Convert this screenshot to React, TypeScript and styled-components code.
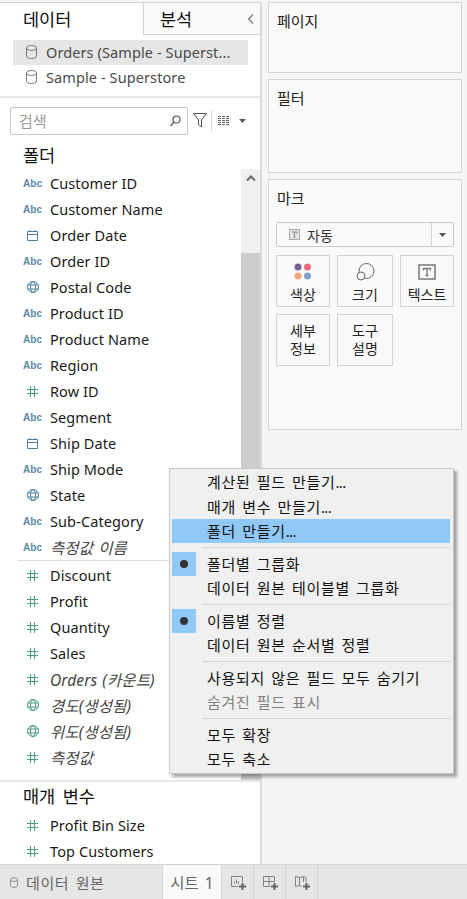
import React from "react";
import styled, { createGlobalStyle } from "styled-components";

const Global = createGlobalStyle`
  html, body { margin: 0; padding: 0; height: 100%; background: #f5f5f5; }
  #root { height: 899px; }
  * { box-sizing: border-box; }
  body { font-family: "Noto Sans", "Noto Sans CJK KR", sans-serif; color: #1a1a1a; overflow: hidden; }
`;

const Page = styled.div`
  position: relative;
  width: 467px;
  height: 899px;
  display: flex;
  flex-direction: column;
  background: #f5f5f5;
`;
const Main = styled.div`
  height: 864px;
  display: flex;
  padding-top: 2px;
`;
const LeftPanel = styled.div`
  width: 262px;
  background: #fff;
  border-top: 1px solid #d4d4d4;
  border-right: 2px solid #d9d9d9;
  display: flex;
  flex-direction: column;
`;
const Tabs = styled.div`
  height: 32px;
  display: flex;
`;
const DataTab = styled.div`
  width: 143px;
  padding: 2px 0 0 23px;
  font-size: 17.5px;
  line-height: 28px;
  color: #111;
`;
const AnalysisTab = styled.div`
  flex: 1;
  display: flex;
  align-items: center;
  justify-content: space-between;
  padding: 0 6px 0 16px;
  background: #fafafa;
  border-left: 1px solid #d4d4d4;
  border-bottom: 1px solid #d4d4d4;
  font-size: 17.5px;
  color: #111;
`;
const Sources = styled.div`
  padding: 5px 13px 7px;
  height: 63px;
  border-bottom: 2px solid #e6e6e6;
`;
const Source = styled.div<{ $selected?: boolean }>`
  height: 25px;
  width: 235px;
  display: flex;
  align-items: center;
  gap: 9px;
  padding: 0 0 2px 13px;
  font-size: 14.5px;
  letter-spacing: 0.1px;
  color: #4a4a4a;
  background: ${(p) => (p.$selected ? "#e6e6e6" : "transparent")};
  white-space: nowrap;
`;
const SearchRow = styled.div`
  display: flex;
  align-items: center;
  padding: 9px 0 0 10px;
  height: 36px;
`;
const SearchBox = styled.div`
  width: 178px;
  height: 28px;
  border: 1px solid #c8c8c8;
  border-radius: 2px;
  display: flex;
  align-items: center;
  justify-content: space-between;
  padding: 0 6px 0 8px;
  font-size: 15px;
  color: #9a9a9a;
`;
const FilterButton = styled.div`
  width: 24px;
  height: 22px;
  display: flex;
  align-items: center;
  justify-content: center;
  border-right: 1px solid #d9d9d9;
`;
const ViewButton = styled.div`
  display: flex;
  align-items: center;
  gap: 9px;
  padding-left: 6px;
`;
const SectionTitle = styled.div<{ $height: number; $pad?: number }>`
  height: ${(p) => p.$height}px;
  padding: 0 0 ${(p) => p.$pad ?? 0}px 23px;
  font-size: 17.5px;
  word-spacing: 3px;
  color: #111;
  display: flex;
  align-items: flex-end;
  line-height: 26px;
`;
const FieldsArea = styled.div`
  height: 613px;
  display: flex;
  border-bottom: 2px solid #e6e6e6;
`;
const FieldList = styled.div`
  width: 241px;
  padding-top: 1px;
`;
const FieldGroup = styled.div<{ $divider?: boolean }>`
  margin-left: ${(p) => (p.$divider ? "18px" : "0")};
  border-bottom: ${(p) => (p.$divider ? "1px solid #dedede" : "none")};
  margin-bottom: ${(p) => (p.$divider ? "1px" : "0")};
`;
const FieldRow = styled.div<{ $indentless?: boolean }>`
  height: 26px;
  display: flex;
  align-items: center;
  margin-left: ${(p) => (p.$indentless ? "-18px" : "0")};
`;
const IconSlot = styled.div`
  width: 50px;
  padding-left: 15px;
  display: flex;
  align-items: center;
  justify-content: center;
  flex-shrink: 0;
`;
const AbcIcon = styled.span`
  font-family: "Liberation Sans", sans-serif;
  font-size: 10px;
  font-weight: 700;
  color: #5b8aa6;
`;
const FieldName = styled.span<{ $italic?: boolean }>`
  font-size: ${(p) => (p.$italic ? "15.5px" : "14.5px")};
  letter-spacing: 0.1px;
  word-spacing: ${(p) => (p.$italic ? "1px" : "0")};
  white-space: nowrap;
  font-style: ${(p) => (p.$italic ? "italic" : "normal")};
  color: ${(p) => (p.$italic ? "#444" : "#1a1a1a")};
`;
const ScrollBar = styled.div`
  width: 19px;
  background: #f0f0f0;
  display: flex;
  flex-direction: column;
`;
const ScrollArrow = styled.div`
  height: 84px;
  display: flex;
  justify-content: center;
  padding-top: 6px;
`;
const ScrollThumb = styled.div`
  flex: 1;
  background: #cdcdcd;
`;
const Params = styled.div`
  display: flex;
  flex-direction: column;
`;

const RightPanel = styled.div`
  flex: 1;
  padding: 0 5px 0 6px;
  display: flex;
  flex-direction: column;
  gap: 6px;
`;
const Card = styled.div<{ $height: number }>`
  height: ${(p) => p.$height}px;
  background: #fafafa;
  border: 1px solid #d4d4d4;
  padding: 0 7px;
`;
const CardTitle = styled.div`
  font-size: 15px;
  line-height: 20px;
  padding: 8px 0 0 1px;
  color: #222;
`;
const MarkSelect = styled.div`
  margin-top: 14px;
  height: 25px;
  width: 178px;
  border: 1px solid #c8c8c8;
  border-radius: 2px;
  display: flex;
  align-items: center;
  font-size: 14px;
  color: #333;
`;
const MarkLabel = styled.div`
  flex: 1;
  display: flex;
  align-items: center;
  gap: 7px;
  padding-left: 12px;
`;
const MarkCaret = styled.div`
  width: 22px;
  height: 100%;
  border-left: 1px solid #d4d4d4;
  display: flex;
  align-items: center;
  justify-content: center;
`;
const MarkGrid = styled.div`
  display: grid;
  grid-template-columns: 54px 56px 54px;
  gap: 7px 7px;
  margin-top: 8px;
`;
const MarkButton = styled.div<{ $tall?: boolean }>`
  height: 52px;
  border: 1px solid #d4d4d4;
  display: flex;
  flex-direction: column;
  align-items: center;
  justify-content: ${(p) => (p.$tall ? "center" : "flex-end")};
  font-size: 14px;
  line-height: 18px;
  color: #222;
  padding-bottom: ${(p) => (p.$tall ? "0" : "2px")};
  text-align: center;
`;
const MarkIcon = styled.div`
  height: 28px;
  display: flex;
  align-items: center;
  justify-content: center;
`;

const BottomBar = styled.div`
  height: 35px;
  background: #e6e6e6;
  border-top: 1px solid #d4d4d4;
  display: flex;
  align-items: stretch;
`;
const SourceTab = styled.div`
  width: 163px;
  display: flex;
  align-items: center;
  gap: 8px;
  padding-left: 10px;
  font-size: 15px;
  word-spacing: 2px;
  letter-spacing: 0.6px;
  color: #666;
  border-right: 1px solid #d4d4d4;
`;
const SheetTab = styled.div`
  width: 59px;
  display: flex;
  align-items: center;
  justify-content: center;
  background: #fafafa;
  font-size: 15.5px;
  word-spacing: 2px;
  color: #666;
  border-right: 1px solid #d4d4d4;
`;
const NewTab = styled.div`
  width: 32px;
  display: flex;
  align-items: center;
  justify-content: center;
  padding: 2px 0 0 2px;
  border-right: 1px solid #d4d4d4;
`;

const Menu = styled.div`
  position: absolute;
  left: 169px;
  top: 468px;
  width: 285px;
  height: 306px;
  background: #f0f0f0;
  border: 1px solid #c8c8c8;
  box-shadow: 3px 3px 3px rgba(0, 0, 0, 0.35);
  padding: 0 3px 0 2px;
  display: flex;
  flex-direction: column;
`;
const MenuItem = styled.div<{ $active?: boolean; $disabled?: boolean; $h?: number }>`
  height: ${(p) => p.$h ?? 24}px;
  display: flex;
  align-items: center;
  background: ${(p) => (p.$active ? "#90c8f6" : "transparent")};
  color: ${(p) => (p.$disabled ? "#808080" : "#111")};
  font-size: 15px;
  letter-spacing: 0.7px;
  word-spacing: 1.6px;
  white-space: nowrap;
`;
const MenuLabel = styled.span`
  margin-bottom: 1px;
`;
const MenuDots = styled.span`
  letter-spacing: -0.6px;
`;
const MenuCheck = styled.div<{ $on?: boolean }>`
  width: 24px;
  height: 24px;
  margin-right: 11px;
  flex-shrink: 0;
  display: flex;
  align-items: center;
  justify-content: center;
  background: ${(p) => (p.$on ? "#90c8f6" : "transparent")};
`;
const MenuDot = styled.span`
  width: 8px;
  height: 8px;
  border-radius: 50%;
  background: #333;
`;
const MenuSep = styled.div`
  height: 1px;
  flex-shrink: 0;
  margin: 4px 0 4px 30px;
  background: #d2d2d2;
`;

const Db = ({ c = "#777", w = 11, h = 14 }: { c?: string; w?: number; h?: number }) => (
  <svg width={w} height={h} viewBox="0 0 11 14" fill="none" stroke={c} strokeWidth="1">
    <path d="M.5 3c0-1.4 2.2-2.500 5-2.500s5 1.100 5 2.500v8c0 1.400-2.200 2.500-5 2.500s-5-1.100-5-2.500z" />
    <path d="M.5 3c0 1.400 2.200 2.500 5 2.500s5-1.100 5-2.500" />
  </svg>
);
const Hash = ({ c = "#4a9e82" }: { c?: string }) => (
  <svg width="11" height="11" viewBox="0 0 11 11" stroke={c} strokeWidth="1" fill="none">
    <path d="M3.500 0v11M7.500 0v11M0 3.500h11M0 7.500h11" />
  </svg>
);
const Calendar = () => (
  <svg width="11" height="11" viewBox="0 0 11 11" stroke="#4d7f9c" strokeWidth="1" fill="none">
    <path d="M.5 1.500h10v9H.5zM.5 4.500h10M3 0v2M8 0v2" />
  </svg>
);
const Globe = ({ c = "#4d7f9c" }: { c?: string }) => (
  <svg width="12" height="12" viewBox="0 0 12 12" stroke={c} strokeWidth="1" fill="none">
    <circle cx="6" cy="6" r="5.500" />
    <ellipse cx="6" cy="6" rx="2.500" ry="5.500" />
    <path d="M.5 4h11M.5 8h11" />
  </svg>
);
const Caret = () => (
  <svg width="7" height="4" viewBox="0 0 7 4"><path d="M0 0h7L3.500 4z" fill="#555" /></svg>
);
const TIcon = ({ s, c, w }: { s: number; c: string; w: number }) => (
  <svg width={s} height={s - 2} viewBox="0 0 18 16" fill="none">
    <rect x="1" y="1" width="16" height="14" stroke={c} strokeWidth={w} fill="none" />
    <path d="M5.500 6.500v-2h7v2M9 4.500v7M7.500 11.500h3" stroke={c} strokeWidth="1.300" />
  </svg>
);
const PlusBadge = () => <path d="M11.500 8v7M8 11.500h7" stroke="#666" strokeWidth="2" />;

type Kind = "abc" | "cal" | "globe" | "hash" | "gglobe";
const FieldIcon = ({ kind }: { kind: Kind }) => {
  if (kind === "abc") return <AbcIcon>Abc</AbcIcon>;
  if (kind === "cal") return <Calendar />;
  if (kind === "globe") return <Globe />;
  if (kind === "gglobe") return <Globe c="#4a9e82" />;
  return <Hash />;
};

const Field = ({ kind, name, italic, full }: { kind: Kind; name: string; italic?: boolean; full?: boolean }) => (
  <FieldRow $indentless={full}>
    <IconSlot><FieldIcon kind={kind} /></IconSlot>
    <FieldName $italic={italic}>{name}</FieldName>
  </FieldRow>
);

const dims: [Kind, string, boolean?][] = [
  ["abc", "Customer ID"], ["abc", "Customer Name"], ["cal", "Order Date"], ["abc", "Order ID"],
  ["globe", "Postal Code"], ["abc", "Product ID"], ["abc", "Product Name"], ["abc", "Region"],
  ["hash", "Row ID"], ["abc", "Segment"], ["cal", "Ship Date"], ["abc", "Ship Mode"],
  ["globe", "State"], ["abc", "Sub-Category"], ["abc", "측정값 이름", true],
];
const measures: [Kind, string, boolean?][] = [
  ["hash", "Discount"], ["hash", "Profit"], ["hash", "Quantity"], ["hash", "Sales"],
  ["hash", "Orders (카운트)", true], ["gglobe", "경도(생성됨)", true], ["gglobe", "위도(생성됨)", true], ["hash", "측정값", true],
];

const Option = ({ label, dots, on, radio, active, disabled, h }: { label: string; dots?: boolean; on?: boolean; radio?: boolean; active?: boolean; disabled?: boolean; h?: number }) => (
  <MenuItem $active={active} $disabled={disabled} $h={h}>
    <MenuCheck $on={on}>{radio && <MenuDot />}</MenuCheck>
    <MenuLabel>{label}{dots && <MenuDots>...</MenuDots>}</MenuLabel>
  </MenuItem>
);

export default function App() {
  return (
    <Page>
      <Global />
      <Main>
        <LeftPanel>
          <Tabs>
            <DataTab>데이터</DataTab>
            <AnalysisTab>
              분석
              <svg width="7" height="10" viewBox="0 0 7 10" fill="none" stroke="#777" strokeWidth="1.200"><path d="M6 .5 1.500 5 6 9.500" /></svg>
            </AnalysisTab>
          </Tabs>
          <Sources>
            <Source $selected><Db />Orders (Sample - Superst...</Source>
            <Source><Db />Sample - Superstore</Source>
          </Sources>
          <SearchRow>
            <SearchBox>
              검색
              <svg width="11" height="12" viewBox="0 0 11 12" fill="none" stroke="#555" strokeWidth="1.200"><circle cx="6.500" cy="4.500" r="3.500" /><path d="M4 7 .5 11" /></svg>
            </SearchBox>
            <FilterButton>
              <svg width="14" height="15" viewBox="0 0 14 15" fill="none" stroke="#555" strokeWidth="1"><path d="M.5.500h13L8.500 7v7l-3-2V7z" /></svg>
            </FilterButton>
            <ViewButton>
              <svg width="12" height="9" viewBox="0 0 12 9" stroke="#666" strokeWidth="1" fill="none" strokeDasharray="3 1">
                <path d="M0 .5h12M0 2.500h12M0 4.500h12M0 6.500h12M0 8.500h12" />
              </svg>
              <Caret />
            </ViewButton>
          </SearchRow>
          <SectionTitle $height={35} $pad={1}>폴더</SectionTitle>
          <FieldsArea>
            <FieldList>
              <FieldGroup $divider>
                {dims.map(([k, n, i]) => <Field key={n} kind={k} name={n} italic={i} full />)}
              </FieldGroup>
              {measures.map(([k, n, i]) => <Field key={n} kind={k} name={n} italic={i} />)}
            </FieldList>
            <ScrollBar>
              <ScrollArrow>
                <svg width="10" height="6" viewBox="0 0 10 6" fill="none" stroke="#666" strokeWidth="2"><path d="M1 5.500 5 1.500l4 4" /></svg>
              </ScrollArrow>
              <ScrollThumb />
            </ScrollBar>
          </FieldsArea>
          <Params>
            <SectionTitle $height={30} $pad={3}>매개 변수</SectionTitle>
            <Field kind="hash" name="Profit Bin Size" />
            <Field kind="hash" name="Top Customers" />
          </Params>
        </LeftPanel>
        <RightPanel>
          <Card $height={71}><CardTitle>페이지</CardTitle></Card>
          <Card $height={94}><CardTitle>필터</CardTitle></Card>
          <Card $height={251}>
            <CardTitle>마크</CardTitle>
            <MarkSelect>
              <MarkLabel>
                <svg width="11" height="11" viewBox="0 0 11 11">
                  <rect x=".5" y=".5" width="10" height="10" fill="#e4e4e4" stroke="#aaa" />
                  <path d="M3 3h5v1.500M5.500 3v5M4.500 8h2" stroke="#888" fill="none" />
                </svg>
                자동
              </MarkLabel>
              <MarkCaret><Caret /></MarkCaret>
            </MarkSelect>
            <MarkGrid>
              <MarkButton>
                <MarkIcon>
                  <svg width="18" height="18" viewBox="0 0 18 18">
                    <circle cx="4" cy="4" r="3.500" fill="#7b5f8f" /><circle cx="13.500" cy="4" r="3.500" fill="#ea6a7e" />
                    <circle cx="4" cy="13" r="3.500" fill="#f0a477" /><circle cx="13.500" cy="13" r="3.500" fill="#7ea2cc" />
                  </svg>
                </MarkIcon>
                색상
              </MarkButton>
              <MarkButton>
                <MarkIcon>
                  <svg width="19" height="18" viewBox="0 0 19 18" fill="none" stroke="#666" strokeWidth="1">
                    <circle cx="10.500" cy="8" r="7.500" /><circle cx="5" cy="13" r="4" fill="#fafafa" />
                  </svg>
                </MarkIcon>
                크기
              </MarkButton>
              <MarkButton>
                <MarkIcon><TIcon s={18} c="#777" w={1.500} /></MarkIcon>
                텍스트
              </MarkButton>
              <MarkButton $tall>세부<br />정보</MarkButton>
              <MarkButton $tall>도구<br />설명</MarkButton>
            </MarkGrid>
          </Card>
        </RightPanel>
      </Main>
      <BottomBar>
        <SourceTab><Db c="#666" w={8} h={11} />데이터 원본</SourceTab>
        <SheetTab>시트 1</SheetTab>
        <NewTab>
          <svg width="16" height="16" viewBox="0 0 16 16" fill="none" stroke="#808080" strokeWidth="1">
            <path d="M7 11.500H.5v-10h11V7M3.500 8.500V6.500M5.500 8.500V4.500M7.500 8.500V6.500" /><PlusBadge />
          </svg>
        </NewTab>
        <NewTab>
          <svg width="16" height="16" viewBox="0 0 16 16" fill="none" stroke="#808080" strokeWidth="1">
            <path d="M7 11.500H.5v-10h11V7M.5 6.500h11M6 1.500V11" /><PlusBadge />
          </svg>
        </NewTab>
        <NewTab>
          <svg width="16" height="16" viewBox="0 0 16 16" fill="none" stroke="#808080" strokeWidth="1">
            <path d="M7 11.500l-2.500-1-4 1v-10l4 1 4-1 2.500 1V7M4.500 2.500v8M8.500 1.500V7" /><PlusBadge />
          </svg>
        </NewTab>
      </BottomBar>
      <Menu>
        <Option h={25} dots label="계산된 필드 만들기" />
        <Option h={25} dots label="매개 변수 만들기" />
        <Option active dots label="폴더 만들기" />
        <MenuSep />
        <Option on radio label="폴더별 그룹화" />
        <Option label="데이터 원본 테이블별 그룹화" />
        <MenuSep />
        <Option on radio label="이름별 정렬" />
        <Option label="데이터 원본 순서별 정렬" />
        <MenuSep />
        <Option label="사용되지 않은 필드 모두 숨기기" />
        <Option disabled label="숨겨진 필드 표시" />
        <MenuSep />
        <Option label="모두 확장" />
        <Option label="모두 축소" />
      </Menu>
    </Page>
  );
}
